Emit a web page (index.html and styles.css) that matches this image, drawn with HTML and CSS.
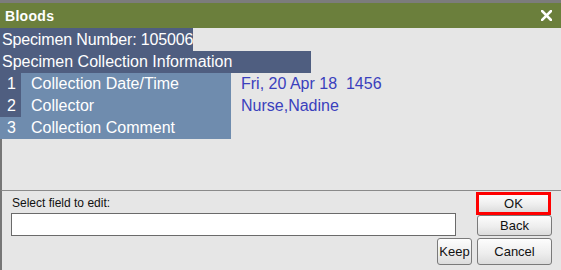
FILE: index.html
```html
<!DOCTYPE html>
<html lang="en">
<head>
    <meta charset="UTF-8">
    <title>Bloods</title>
    <link rel="stylesheet" href="styles.css">
</head>
<body>
    <div class="window">
        <!-- title bar -->
        <div class="title-bar">
            <span class="title">Bloods</span>
            <svg class="close" width="11" height="11" viewBox="0 0 11 11">
                <path d="M1 1 L10 10 M10 1 L1 10" stroke="#fff" stroke-width="2.6" stroke-linecap="square"/>
            </svg>
        </div>

        <!-- specimen info -->
        <div class="content">
            <div class="head-row specimen">Specimen Number: 105006</div>
            <div class="head-row section">Specimen Collection Information</div>
            <div class="field-row">
                <div class="num dark">1</div>
                <div class="label">Collection Date/Time</div>
                <div class="value">Fri, 20 Apr 18&nbsp; 1456</div>
            </div>
            <div class="field-row">
                <div class="num dark">2</div>
                <div class="label">Collector</div>
                <div class="value">Nurse,Nadine</div>
            </div>
            <div class="field-row">
                <div class="num">3</div>
                <div class="label">Collection Comment</div>
                <div class="value"></div>
            </div>
        </div>

        <div class="spacer"></div>

        <!-- bottom edit area -->
        <div class="footer">
            <div class="edit-area">
                <div class="edit-label">Select field to edit:</div>
                <input type="text" class="edit-input">
                <div class="keep-row">
                    <button class="btn btn-keep">Keep</button>
                </div>
            </div>
            <div class="btn-column">
                <button class="btn btn-ok">OK</button>
                <button class="btn btn-back">Back</button>
                <button class="btn btn-cancel">Cancel</button>
            </div>
        </div>
    </div>
</body>
</html>
```

FILE: styles.css
```css
/* window */
body {
    margin: 0;
    padding: 0;
    width: 561px;
    height: 270px;
    overflow: hidden;
    background: #e6e6e6;
    font-family: 'Liberation Sans', Arial, sans-serif;
}

.window {
    display: flex;
    flex-direction: column;
    height: 270px;
    border-top: 3px solid #7c7c7c;
    box-sizing: border-box;
}

/* title bar */
.title-bar {
    display: flex;
    align-items: center;
    justify-content: space-between;
    height: 25px;
    padding: 0 9px 0 5px;
    background: #6b7f3c;
}

.title {
    color: #fff;
    font-size: 14px;
    font-weight: bold;
    letter-spacing: 0.3px;
}

.close {
    display: block;
}

/* specimen rows */
.content {
    font-size: 16px;
    color: #fff;
}

.head-row {
    background: #4f5e80;
    white-space: nowrap;
    overflow: hidden;
}

.specimen {
    width: 191px;
    height: 23px;
    line-height: 23px;
    padding-left: 2px;
    letter-spacing: -0.15px;
}

.section {
    width: 309px;
    height: 22px;
    line-height: 22px;
    padding-left: 2px;
}

.field-row {
    display: flex;
    height: 22px;
    line-height: 22px;
}

.num {
    width: 21px;
    box-sizing: border-box;
    padding-left: 7px;
    background: #6f8cae;
}

.num.dark {
    background: #4f5e80;
}

.label {
    width: 200px;
    padding-left: 10px;
    background: #6f8cae;
}

.value {
    padding-left: 10px;
    color: #3a40bd;
}

.spacer {
    flex: 1;
    border-left: 2px solid #767676;
}

/* footer */
.footer {
    display: flex;
    height: 80px;
    border-top: 1px solid #8a8a8a;
    border-left: 2px solid #767676;
    padding: 1px 9px 0 9px;
    box-sizing: border-box;
}

.edit-area {
    flex: 1;
    display: flex;
    flex-direction: column;
    margin-right: 4px;
}

.edit-label {
    font-size: 12px;
    color: #111;
    height: 21px;
    line-height: 16px;
    padding: 3px 0 0 1px;
    box-sizing: border-box;
}

.edit-input {
    height: 23px;
    margin: 0 16px 0 0;
    border: 1px solid #6a6a6a;
    background: #fff;
    box-sizing: border-box;
    padding: 0 4px;
}

.keep-row {
    display: flex;
    justify-content: flex-end;
    margin-top: 2px;
}

.btn-column {
    display: flex;
    flex-direction: column;
    width: 76px;
}

.btn {
    font-family: 'Liberation Sans', Arial, sans-serif;
    font-size: 13px;
    color: #111;
    background: linear-gradient(#fdfdfd, #eeeeee 55%, #dcdcdc);
    border: 1px solid #7a7a7a;
    border-radius: 3px;
    padding: 0;
    box-sizing: border-box;
    cursor: pointer;
}

.btn-ok {
    width: 75px;
    height: 23px;
    border: 3px solid #f00;
    border-radius: 0;
}

.btn-back {
    width: 75px;
    height: 21px;
    margin-left: 1px;
}

.btn-cancel {
    width: 75px;
    height: 27px;
    margin: 2px 0 0 1px;
}

.btn-keep {
    width: 35px;
    height: 27px;
    font-size: 13px;
}
```
